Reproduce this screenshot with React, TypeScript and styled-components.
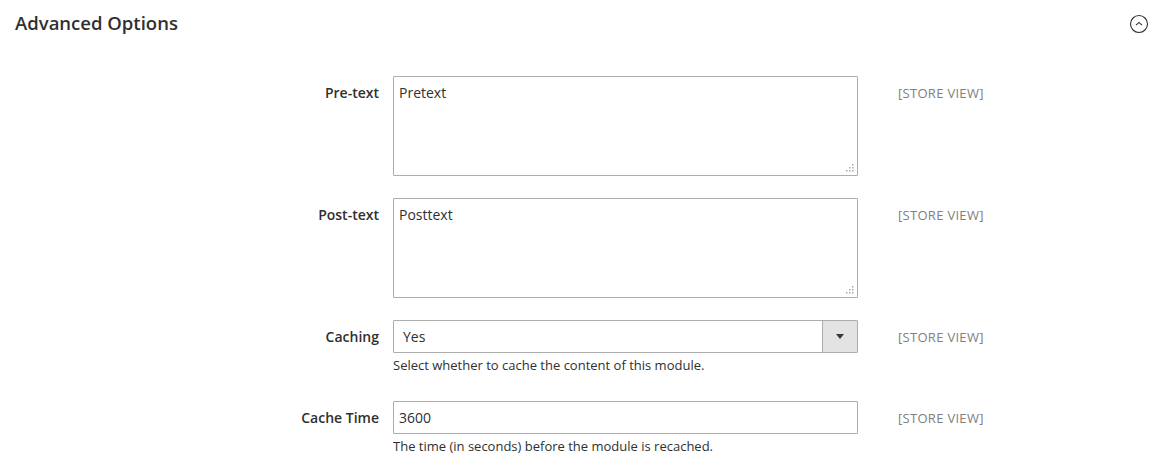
import styled, { createGlobalStyle } from "styled-components";

const Global = createGlobalStyle`
  body {
    margin: 0;
    background: #fff;
    font-family: "Open Sans", "Liberation Sans", sans-serif;
    color: #303030;
  }
`;

type Row = {
  label: string;
  kind: "textarea" | "select" | "input";
  value: string;
  note?: string;
};

const rows: Row[] = [
  { label: "Pre-text", kind: "textarea", value: "Pretext" },
  { label: "Post-text", kind: "textarea", value: "Posttext" },
  {
    label: "Caching",
    kind: "select",
    value: "Yes",
    note: "Select whether to cache the content of this module.",
  },
  {
    label: "Cache Time",
    kind: "input",
    value: "3600",
    note: "The time (in seconds) before the module is recached.",
  },
];

// little dotted resize handle in the textarea corner
const gripDots = [
  [7, 1],
  [4, 4],
  [7, 4],
  [1, 7],
  [4, 7],
  [7, 7],
];

export default function App() {
  return (
    <>
      <Global />
      <Section>
        <Header>
          <Title>Advanced Options</Title>
          <Toggle>
            <svg width="20" height="20" viewBox="0 0 20 20">
              <circle cx="10" cy="10" r="8.5" fill="none" stroke="#303030" strokeWidth="1.1" />
              <path d="M7 11.2 L10 8.4 L13 11.2" fill="none" stroke="#303030" strokeWidth="1.1" />
            </svg>
          </Toggle>
        </Header>
        <Form>
          {rows.map((r) => (
            <Field key={r.label}>
              <Label>{r.label}</Label>
              <Control>
                {r.kind === "textarea" && (
                  <AreaWrap>
                    <TextArea defaultValue={r.value} />
                    <Grip width="10" height="10" viewBox="0 0 10 10">
                      {gripDots.map(([x, y]) => (
                        <rect key={`${x}-${y}`} x={x} y={y} width="1.5" height="1.5" fill="#a8a8a8" />
                      ))}
                    </Grip>
                  </AreaWrap>
                )}
                {r.kind === "input" && <TextInput defaultValue={r.value} />}
                {r.kind === "select" && (
                  <SelectBox>
                    <SelectValue>{r.value}</SelectValue>
                    <SelectArrow>
                      <Caret />
                    </SelectArrow>
                  </SelectBox>
                )}
                {r.note && <Note>{r.note}</Note>}
              </Control>
              <Scope>[STORE VIEW]</Scope>
            </Field>
          ))}
        </Form>
      </Section>
    </>
  );
}

const Section = styled.div`
  width: 1167px;
`;

const Header = styled.div`
  display: flex;
  align-items: center;
  justify-content: space-between;
  height: 46px;
  padding: 0 18px 0 15px;
  box-sizing: border-box;
`;

const Title = styled.h2`
  margin: 0;
  font-size: 18.5px;
  font-weight: 600;
  color: #303030;
  line-height: 22px;
`;

const Toggle = styled.div`
  width: 20px;
  height: 20px;
  display: flex;
  margin-top: 2px;
`;

const Form = styled.div`
  margin-top: 30px;
  display: flex;
  flex-direction: column;
  gap: 22px;
`;

const Field = styled.div`
  display: grid;
  grid-template-columns: 393px 465px auto;
  align-items: start;
`;

const Label = styled.label`
  text-align: right;
  padding-right: 14px;
  padding-top: 8px;
  font-size: 14px;
  line-height: 18px;
  font-weight: 600;
  color: #303030;
`;

const Control = styled.div`
  display: flex;
  flex-direction: column;
`;

const AreaWrap = styled.div`
  position: relative;
  width: 465px;
  height: 100px;
`;

const TextArea = styled.textarea`
  display: block;
  box-sizing: border-box;
  width: 465px;
  height: 100px;
  border: 1px solid #adadad;
  border-radius: 1px;
  padding: 7px 5px;
  margin: 0;
  font-family: "Open Sans", "Liberation Sans", sans-serif;
  font-size: 14px;
  line-height: 18px;
  color: #303030;
  outline: none;
  resize: none;
`;

const Grip = styled.svg`
  position: absolute;
  right: 3px;
  bottom: 3px;
  pointer-events: none;
`;

const TextInput = styled.input`
  box-sizing: border-box;
  width: 465px;
  height: 33px;
  border: 1px solid #adadad;
  border-radius: 1px;
  padding: 0 5px;
  margin: 0;
  font-family: "Open Sans", "Liberation Sans", sans-serif;
  font-size: 14px;
  color: #303030;
  outline: none;
`;

const SelectBox = styled.div`
  box-sizing: border-box;
  width: 465px;
  height: 33px;
  border: 1px solid #adadad;
  border-radius: 1px;
  display: flex;
  align-items: stretch;
`;

const SelectValue = styled.div`
  flex: 1;
  display: flex;
  align-items: center;
  padding-left: 9px;
  font-size: 14px;
  color: #303030;
`;

const SelectArrow = styled.div`
  width: 34px;
  background: #e3e3e3;
  border-left: 1px solid #adadad;
  display: flex;
  align-items: center;
  justify-content: center;
`;

const Caret = styled.span`
  width: 0;
  height: 0;
  border-left: 4px solid transparent;
  border-right: 4px solid transparent;
  border-top: 5px solid #41362f;
`;

const Note = styled.div`
  margin-top: 4px;
  margin-bottom: 6px;
  font-size: 13px;
  line-height: 16px;
  color: #303030;
`;

const Scope = styled.div`
  padding-left: 40px;
  padding-top: 8px;
  font-size: 13px;
  line-height: 18px;
  color: #808080;
  letter-spacing: 0.3px;
`;
